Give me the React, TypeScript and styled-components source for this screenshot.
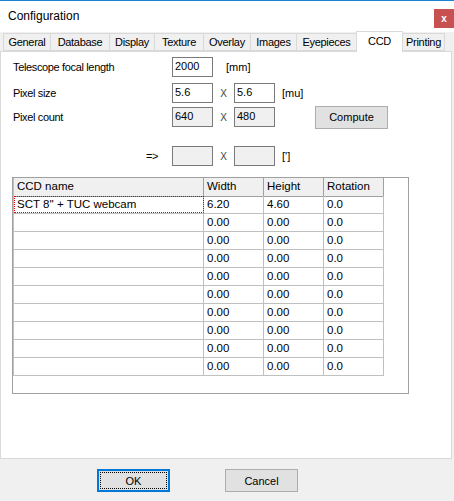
import React from 'react'
import styled, { createGlobalStyle } from 'styled-components'

// tab captions with their measured widths
const tabs = [
  { label: 'General', width: 47 },
  { label: 'Database', width: 59 },
  { label: 'Display', width: 45 },
  { label: 'Texture', width: 49 },
  { label: 'Overlay', width: 47 },
  { label: 'Images', width: 46 },
  { label: 'Eyepieces', width: 60 },
  { label: 'CCD', width: 46 },
  { label: 'Printing', width: 42 },
]

const ccdRows = [
  { name: 'SCT 8\'\' + TUC webcam', width: '6.20', height: '4.60', rotation: '0.0' },
  ...Array.from({ length: 9 }, () => ({ name: '', width: '0.00', height: '0.00', rotation: '0.0' })),
]

export default function App() {
  return (
    <>
      <GlobalStyle />
      <Window>
        <TitleBar>
          <Title>Configuration</Title>
          <CloseButton>x</CloseButton>
        </TitleBar>
        <TabStrip>
          {tabs.map((t) => (
            <Tab key={t.label} $width={t.width} $active={t.label === 'CCD'}>
              {t.label}
            </Tab>
          ))}
        </TabStrip>
        <Panel>
          <Row $top={5}>
            <Label>Telescope focal length</Label>
            <Field>2000</Field>
            <Unit $left={13}>[mm]</Unit>
          </Row>
          <Row $top={6}>
            <Label>Pixel size</Label>
            <Field>5.6</Field>
            <Cross>X</Cross>
            <Field>5.6</Field>
            <Unit $left={7}>[mu]</Unit>
          </Row>
          <Row $top={4}>
            <Label>Pixel count</Label>
            <Field $disabled>640</Field>
            <Cross>X</Cross>
            <Field $disabled>480</Field>
            <Button $left={40} $width={73}>Compute</Button>
          </Row>
          <Row $top={19}>
            <Label $indent={133}>=&gt;</Label>
            <Field $disabled />
            <Cross>X</Cross>
            <Field $disabled />
            <Unit $left={7}>[']</Unit>
          </Row>
          <GridBox>
            <Grid>
              <HeadCell>CCD name</HeadCell>
              <HeadCell>Width</HeadCell>
              <HeadCell>Height</HeadCell>
              <HeadCell>Rotation</HeadCell>
              {ccdRows.map((r, i) => (
                <React.Fragment key={i}>
                  <Cell $focused={i === 0}>{r.name}</Cell>
                  <Cell>{r.width}</Cell>
                  <Cell>{r.height}</Cell>
                  <Cell>{r.rotation}</Cell>
                </React.Fragment>
              ))}
            </Grid>
          </GridBox>
        </Panel>
        <Footer>
          <Button $default $width={73}>OK</Button>
          <Button $width={73}>Cancel</Button>
        </Footer>
      </Window>
    </>
  )
}

const GlobalStyle = createGlobalStyle`
  html, body {
    margin: 0;
    padding: 0;
    background: #f0f0f0;
  }
  body {
    font-family: 'Liberation Sans', Arial, sans-serif;
    font-size: 11px;
    color: #000;
  }
`

const Window = styled.div`
  width: 454px;
  height: 501px;
  display: flex;
  flex-direction: column;
  background: #f0f0f0;
  border-top: 1px solid #1883d7;
  box-sizing: border-box;
  overflow: hidden;
`

const TitleBar = styled.div`
  height: 31px;
  background: #fff;
  display: flex;
  align-items: center;
  justify-content: space-between;
  padding-left: 8px;
`

const Title = styled.div`
  font-size: 12px;
  margin-top: -1px;
`

const CloseButton = styled.div`
  width: 20px;
  height: 19px;
  margin-top: 3px;
  background: #c75050;
  color: #fff;
  font-weight: bold;
  font-size: 10px;
  display: flex;
  align-items: center;
  justify-content: center;
`

const TabStrip = styled.div`
  height: 19px;
  display: flex;
  align-items: flex-end;
  padding-left: 4px;
  position: relative;
  z-index: 1;
`

const Tab = styled.div<{ $active?: boolean; $width: number }>`
  width: ${(p) => p.$width + 1}px;
  height: ${(p) => (p.$active ? 21 : 18)}px;
  margin-bottom: ${(p) => (p.$active ? -1 : 0)}px;
  margin-left: -1px;
  border: 1px solid #d9d9d9;
  border-bottom: ${(p) => (p.$active ? 'none' : '1px solid #d9d9d9')};
  background: ${(p) => (p.$active ? '#fff' : '#f0f0f0')};
  box-sizing: border-box;
  display: flex;
  justify-content: center;
  align-items: ${(p) => (p.$active ? 'flex-start' : 'center')};
  padding-top: ${(p) => (p.$active ? 2 : 0)}px;
  line-height: 14px;
  letter-spacing: -0.3px;
  white-space: nowrap;
`

const Panel = styled.div`
  width: 452px;
  height: 408px;
  box-sizing: border-box;
  background: #fff;
  border: 1px solid #d9d9d9;
  display: flex;
  flex-direction: column;
`

const Row = styled.div<{ $top: number }>`
  display: flex;
  align-items: center;
  height: 20px;
  margin-top: ${(p) => p.$top}px;
  padding-left: 12px;
`

const Label = styled.div<{ $indent?: number }>`
  width: 159px;
  padding-left: ${(p) => p.$indent ?? 0}px;
  box-sizing: border-box;
  letter-spacing: -0.35px;
`

const Field = styled.div<{ $disabled?: boolean }>`
  width: 41px;
  height: 20px;
  box-sizing: border-box;
  border: 1px solid #7a7a7a;
  background: ${(p) => (p.$disabled ? '#f0f0f0' : '#fff')};
  padding: 1px 0 0 2px;
  line-height: 14px;
`

const Cross = styled.div`
  width: 21px;
  text-align: center;
  color: #444;
  font-size: 10px;
`

const Unit = styled.div<{ $left: number }>`
  margin-left: ${(p) => p.$left}px;
`

const Button = styled.div<{ $left?: number; $width: number; $default?: boolean }>`
  margin-left: ${(p) => p.$left ?? 0}px;
  width: ${(p) => p.$width}px;
  height: 23px;
  flex-shrink: 0;
  box-sizing: border-box;
  background: #e1e1e1;
  border: ${(p) => (p.$default ? '2px solid #0078d7' : '1px solid #adadad')};
  display: flex;
  align-items: center;
  justify-content: center;
  font-size: 11px;
  position: relative;
  ${(p) =>
    p.$default &&
    `
    &::after {
      content: '';
      position: absolute;
      inset: 1px;
      border: 1px dotted #000;
    }
  `}
`

const GridBox = styled.div`
  margin: 11px 0 0 11px;
  width: 397px;
  height: 217px;
  box-sizing: border-box;
  border: 1px solid #a0a0a0;
`

const Grid = styled.div`
  display: grid;
  grid-template-columns: 190px 60px 60px 60px;
  grid-auto-rows: 18px;
  width: 370px;
  border-left: 1px solid #c0c0c0;
  font-size: 11.5px;
`

const HeadCell = styled.div`
  background: #f0f0f0;
  border-right: 1px solid #a0a0a0;
  border-bottom: 1px solid #a0a0a0;
  padding-left: 3px;
  line-height: 17px;
  height: 19px;
  box-sizing: border-box;
  margin-bottom: 1px;
`

const Cell = styled.div<{ $focused?: boolean }>`
  border-right: 1px solid #c0c0c0;
  border-bottom: 1px solid #c0c0c0;
  padding-left: 3px;
  line-height: 17px;
  box-sizing: border-box;
  position: relative;
  ${(p) =>
    p.$focused &&
    `
    &::after {
      content: '';
      position: absolute;
      inset: 0 -1px 0 0;
      border: 1px dotted #e00000;
    }
  `}
`

const Footer = styled.div`
  flex: 1;
  display: flex;
  align-items: flex-start;
  gap: 55px;
  padding: 10px 0 0 97px;
`
